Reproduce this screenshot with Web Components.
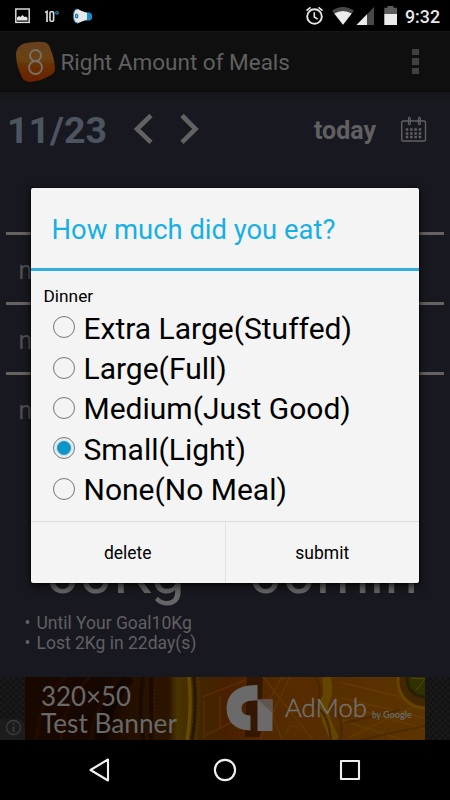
<!DOCTYPE html>
<html lang="en">
<head>
<meta charset="utf-8">
<title>Right Amount of Meals</title>
<style>
body {
  margin: 0;
  background: #000;
  font-family: Roboto, "Noto Sans", sans-serif;
}
</style>
</head>
<body>
<meal-app>
  <status-bar slot="status" time="9:32"></status-bar>
  <app-bar slot="bar">Right Amount of Meals</app-bar>
  <date-bar slot="date" date="11/23">today</date-bar>
  <meal-list slot="list">
    <meal-row></meal-row>
    <meal-row>none</meal-row>
    <meal-row>none</meal-row>
    <meal-row>none</meal-row>
  </meal-list>
  <meal-stats slot="stats">
    <span slot="weight">60Kg</span>
    <span slot="time">60min</span>
    <li>Until Your Goal10Kg</li>
    <li>Lost 2Kg in 22day(s)</li>
  </meal-stats>
  <ad-banner slot="ad"></ad-banner>
  <nav-bar slot="nav"></nav-bar>
  <meal-dialog slot="dialog" heading="How much did you eat?" label="Dinner">
    <radio-option>Extra Large(Stuffed)</radio-option>
    <radio-option>Large(Full)</radio-option>
    <radio-option>Medium(Just Good)</radio-option>
    <radio-option checked>Small(Light)</radio-option>
    <radio-option>None(No Meal)</radio-option>
    <dialog-button slot="actions">delete</dialog-button>
    <dialog-button slot="actions">submit</dialog-button>
  </meal-dialog>
</meal-app>

<script>
/**
 * Registers an element whose shadow root holds the given markup.
 */
function define (name, html, setUp) {
  const template = document.createElement('template')
  template.innerHTML = html
  window.customElements.define(name, class extends HTMLElement {
    constructor () {
      super()
      this.attachShadow({ mode: 'open' }).appendChild(document.importNode(template.content, true))
    }

    connectedCallback () {
      if (setUp) setUp(this, this.shadowRoot)
    }
  })
}

define('meal-app', `
<style>
:host {
  display: flex;
  flex-direction: column;
  position: relative;
  width: 450px;
  height: 800px;
  overflow: hidden;
  background: #181820;
}
.overlay {
  position: absolute;
  top: 188px;
  left: 31px;
}
.stats {
  flex: 1;
}
</style>
<slot name="status"></slot>
<slot name="bar"></slot>
<slot name="date"></slot>
<slot name="list"></slot>
<div class="stats"><slot name="stats"></slot></div>
<slot name="ad"></slot>
<slot name="nav"></slot>
<div class="overlay"><slot name="dialog"></slot></div>
`)

define('status-bar', `
<style>
:host {
  display: flex;
  height: 31px;
  background: #000;
}
svg {
  display: block;
}
.time {
  width: 45px;
  line-height: 33px;
  font-size: 17.8px;
  font-weight: 500;
  color: #e8e8e8;
}
</style>
<svg width="405" height="31" viewBox="0 0 405 31">
  <!-- screenshot -->
  <rect x="15.8" y="9" width="13.4" height="13.4" fill="none" stroke="#e6e6e6" stroke-width="1.4"/>
  <path d="M17 20.5v-3l2-1.5 1.5 1 2-2 2 2 1.5-.5 1.5 1.5v2.5z" fill="#e6e6e6"/>
  <!-- temperature -->
  <path d="M45.2 12.5l1.8-1v10.5" fill="none" stroke="#ddd" stroke-width="1.7"/>
  <rect x="50" y="11.7" width="3.6" height="9.6" rx="1" fill="none" stroke="#ddd" stroke-width="1.6"/>
  <circle cx="57" cy="12.8" r="1.3" fill="none" stroke="#1689b5" stroke-width="1.2"/>
  <!-- megaphone -->
  <path d="M84 12l6 .5 2 2v4l-2 2-6 .3z" fill="#1a8fc4"/>
  <path d="M77 9l10 4v6.500l-10 4z" fill="#e6e8ea"/>
  <ellipse cx="77.400" cy="16" rx="4" ry="7" fill="#e4e8ea"/>
  <path d="M78 9.300c-3-1-4.500 2-4.500 6.700s1.500 7.700 4.500 6.700" fill="none" stroke="#1a7fae" stroke-width=".8"/>
  <ellipse cx="76.600" cy="16" rx="1.800" ry="2.500" fill="#1a79a5"/>
  <circle cx="76.600" cy="16" r=".7" fill="#cde"/>
  <!-- alarm -->
  <circle cx="314.5" cy="16.5" r="7.3" fill="none" stroke="#e6e6e6" stroke-width="1.9"/>
  <path d="M314.3 12.3v4.700l3.300 2.200M306.500 10.700l4-3.400M322.500 10.700l-4-3.400" fill="none" stroke="#e6e6e6" stroke-width="1.6"/>
  <!-- wifi -->
  <path d="M332 10.700q11-7.500 22 0l-11 14z" fill="#484848"/>
  <path d="M334.300 13.600q8.700-5.400 17.400 0l-8.700 11.100z" fill="#ececec"/>
  <!-- signal -->
  <path d="M374 7v18h-17.500z" fill="#484848"/>
  <path d="M367 14.200v10.800h-10.500z" fill="#ececec"/>
  <!-- battery -->
  <path d="M387.500 6h6v1.800h3.500v6.200h-12.700v-6.200h3.200z" fill="#5c5c5c"/>
  <path d="M384.300 14h12.700v11h-12.700z" fill="#ececec"/>
</svg>
<div class="time"></div>
`, (el, root) => {
  root.querySelector('.time').textContent = el.getAttribute('time')
})

define('app-bar', `
<style>
:host {
  display: flex;
  align-items: center;
  box-sizing: border-box;
  height: 61px;
  padding: 0 0 0 15px;
  border-top: 1px solid #171717;
  border-bottom: 1px solid #0c0a0a;
  background: #0f0f0f;
}
.title {
  flex: 1;
  margin-left: 4.5px;
  font-size: 22.5px;
  color: #606060;
}
.menu {
  display: grid;
  gap: 3px;
  margin-right: 31.5px;
}
.menu i {
  width: 6.5px;
  height: 6.3px;
  background: #404040;
}
</style>
<svg width="41" height="42" viewBox="0 0 41 42">
  <defs><linearGradient id="g" x1="0" y1="0" x2="0" y2="1">
    <stop offset="0" stop-color="#66401f"/><stop offset=".5" stop-color="#6b4210"/>
    <stop offset=".55" stop-color="#653806"/><stop offset="1" stop-color="#661c00"/>
  </linearGradient></defs>
  <path d="M9 2.500Q20 0 29 1q5 1 6.500 7 3.500 8 4.500 19 0 6-6 8-8 5-19 6-7 0-9-7Q1 24 1 12q1-7 8-9.500z" fill="url(#g)"/>
  <path d="M2 18q8 6 19 3t17-3q2 5 2 9 0 6-6 8-8 5-19 6-7 0-9-7-3-8-4-16z" fill="#702a00" opacity=".3"/>
  <g fill="none" stroke="#77706a" stroke-width="1.9"><circle cx="20.5" cy="14.5" r="5.5"/><circle cx="20.5" cy="26.5" r="6.5"/></g>
</svg>
<div class="title"><slot></slot></div>
<div class="menu"><i></i><i></i><i></i></div>
`)

define('date-bar', `
<style>
:host {
  display: flex;
  align-items: center;
  height: 76px;
  color: #606060;
  background: linear-gradient(#15161a, #181820 14px);
}
.date {
  width: 126.5px;
  padding-left: 7px;
  font-size: 37.5px;
  font-weight: 700;
  color: #4c555f;
}
.today {
  flex: 1;
  padding-right: 24px;
  text-align: right;
  font-size: 25px;
  font-weight: 700;
}
.calendar {
  margin: 0 23px 1px 0;
}
</style>
<div class="date"></div>
<svg width="70" height="34" viewBox="0 0 70 34" fill="none" stroke="#626262" stroke-width="4.6">
  <path d="M17 2.500L3 16l14 13.300M48 2.500l13.500 13.500L48 29.300"/>
</svg>
<div class="today"><slot></slot></div>
<svg class="calendar" width="27" height="28" viewBox="0 0 27 28" fill="none" stroke="#606060" stroke-width="1.4">
  <rect x="1.7" y="5" width="23.8" height="20" rx="1.3"/>
  <path d="M8.500 8.500V3q0-1.800 1.500-1.800M18.500 8.500V3q0-1.800 1.500-1.800M10.300 1.500v6.500l-1.500 1M20.300 1.500v6.500l-1.500 1" stroke-width="1.2"/>
  <path d="M5.800 13.500h15.500M5.800 17.500h15.500M5.800 21h15.500" stroke-width="2.3" stroke-dasharray="2.5 1.8"/>
</svg>
`, (el, root) => {
  root.querySelector('.date').textContent = el.getAttribute('date')
})

define('meal-list', `
<style>
:host {
  display: flex;
  flex-direction: column;
  height: 370px;
  padding: 0 6px;
  margin-top: -3px;
}
</style>
<slot></slot>
`)

define('meal-row', `
<style>
:host {
  display: flex;
  align-items: center;
  box-sizing: border-box;
  height: 70px;
  padding: 3px 0 0 12.5px;
  border-bottom: 3px solid #65625f;
  font-size: 25px;
  color: #505050;
}
:host(:last-of-type) {
  border-bottom-color: transparent;
}
</style>
<slot></slot>
`)

define('meal-stats', `
<style>
:host {
  display: flex;
  flex-direction: column;
  padding-top: 2.5px;
  color: #606060;
}
.values {
  display: flex;
  height: 68px;
  padding-left: 44.5px;
  line-height: 69px;
  font-size: 61px;
  color: #656565;
}
.weight {
  width: 203px;
}
ul {
  margin: 7.5px 0 0;
  padding-left: 36.5px;
  list-style: none;
  font-size: 17.5px;
  line-height: 20.4px;
}
::slotted(li)::before {
  content: "•";
  display: inline-block;
  width: 12px;
  margin-left: -12px;
}
</style>
<div class="values">
  <div class="weight"><slot name="weight"></slot></div>
  <slot name="time"></slot>
</div>
<ul><slot></slot></ul>
`)

define('ad-banner', `
<style>
:host {
  display: block;
  height: 63px;
  background: #131313;
}
svg {
  display: block;
}
text {
  fill: #696969;
  font-family: Lato, sans-serif;
}
</style>
<svg width="450" height="63" viewBox="0 0 450 63">
  <defs>
    <pattern id="hex" width="6" height="6" patternUnits="userSpaceOnUse">
      <circle cx="1.5" cy="1.5" r="1.3" fill="#1b1b1b"/><circle cx="4.5" cy="4.5" r="1.3" fill="#1b1b1b"/>
    </pattern>
    <linearGradient id="art">
      <stop offset="0" stop-color="#190800"/><stop offset=".2" stop-color="#160700"/>
      <stop offset=".27" stop-color="#251000"/><stop offset=".36" stop-color="#2c1500"/>
      <stop offset=".38" stop-color="#4a3400"/><stop offset=".44" stop-color="#402600"/>
      <stop offset=".5" stop-color="#482000"/><stop offset=".65" stop-color="#552b00"/>
      <stop offset="1" stop-color="#5c3400"/>
    </linearGradient>
    <clipPath id="clip"><rect x="25" width="400" height="63"/></clipPath>
  </defs>
  <rect width="450" height="63" fill="url(#hex)"/>
  <g clip-path="url(#clip)">
    <rect x="25" width="400" height="63" fill="url(#art)"/>
    <g fill="none" opacity=".55">
      <path d="M130 0q-24 26-29 63" stroke="#080300" stroke-width="11"/>
      <path d="M67 0q-28 18-30 63M90 0q-27 25-29 63M115 6q-23 28-24 57" stroke="#2b1000" stroke-width="3"/>
      <path d="M143 0q-5 30 0 63M151 0v63" stroke="#120500" stroke-width="4"/>
      <path d="M156 0q-3 30 1 63" stroke="#3b1d00" stroke-width="3" stroke-dasharray="2 2"/>
      <path d="M189 0q3 35-2 63" stroke="#806400" stroke-width="3.5"/>
      <path d="M194 0q3 35-2 63" stroke="#110800" stroke-width="3"/>
      <path d="M198 0q3 35-2 63" stroke="#573300" stroke-width="3" stroke-dasharray="2 1.5"/>
      <path d="M202 20l44-17M202 60l45-22M204 24v33M220 19v32" stroke="#6a3500" stroke-width="1.5"/>
      <path d="M247 0h16l-3 60h-15z" fill="#200c00"/>
      <path d="M282 0l-14 25 14 38M263 0l50 63M290 0l-30 63M286 57q4-13 14-5" stroke="#683c00" stroke-width="1.6"/>
      <path d="M326 0q4 16-1 24t10 39" stroke="#6f5a00" stroke-width="9"/>
      <path d="M316 0q8 18-1 30 13 4 16 33M340 63q5-20-6-34" stroke="#3e2500" stroke-width="2.500"/>
      <path d="M342 21l83 20M342 28l83 24M342 43l60 20M350 60l75-36M342 6l60 14" stroke="#6e4200" stroke-width="1.500"/>
      <path d="M345 46l55-13M360 63l65-14" stroke="#432400" stroke-width="2"/>
    </g>
    <circle cx="425" cy="4" r="27" fill="#432700" stroke="#664300" stroke-width="3"/>
    <circle cx="425" cy="2" r="18" fill="#313000" stroke="#252000" stroke-width="3"/>
    <path d="M425 2l-14-1M425 2l-9 11" stroke="#534c00"/>
  </g>
  <text x="41" y="29" font-size="26.2" textLength="90" lengthAdjust="spacingAndGlyphs">320×50</text>
  <text x="41" y="55.5" font-size="26.2" textLength="136" lengthAdjust="spacingAndGlyphs">Test Banner</text>
  <!-- AdMob mark -->
  <path d="M257.500 8v15.500q-16-1-16 8 0 7 9 7v15q-24-1-24-23Q228 8 257.500 8z" fill="#6a6a6a"/>
  <path d="M257.500 22.500h15V54h-15z" fill="#6a6a6a"/>
  <path d="M257.500 22.500h15V36z" fill="#5f554e"/>
  <text x="285" y="40" font-size="25.5" font-weight="300" textLength="82" lengthAdjust="spacingAndGlyphs" style="fill: #747474; stroke: #747474; stroke-width: .4">AdMob</text>
  <text x="372" y="40.5" font-size="9" font-weight="700" textLength="9" lengthAdjust="spacingAndGlyphs">by</text>
  <text x="383" y="40.5" font-size="10" font-weight="700" textLength="29" lengthAdjust="spacingAndGlyphs">Google</text>
  <!-- ad info -->
  <path d="M0 42h18q7 0 7 8v13H0z" fill="#1c1c1c"/>
  <circle cx="13.5" cy="50.5" r="7" fill="none" stroke="#3d3d3d" stroke-width="1.3"/>
  <path d="M13.500 46v1.800M13.500 49.500v5.500" stroke="#3d3d3d" stroke-width="1.8"/>
</svg>
`)

define('nav-bar', `
<style>
:host {
  display: flex;
  justify-content: center;
  align-items: center;
  gap: 99px;
  height: 60px;
  background: #000;
}
svg {
  width: 26px;
  height: 26px;
  fill: none;
  stroke: #f0f0f0;
  stroke-width: 2.1;
  stroke-linejoin: round;
}
</style>
<svg viewBox="0 0 26 26"><path d="M3.500 13L21 2.500v21z"/></svg>
<svg viewBox="0 0 26 26"><circle cx="13" cy="13" r="10.1"/></svg>
<svg viewBox="0 0 26 26"><rect x="4" y="4" width="18" height="18"/></svg>
`)

define('meal-dialog', `
<style>
:host {
  display: flex;
  flex-direction: column;
  width: 388px;
  height: 394.5px;
  border-radius: 2px;
  background: #f4f4f4;
  box-shadow: 0 0 2px #000, 0 3px 9px rgba(0, 0, 0, .8);
  overflow: hidden;
  color: #000;
}
.heading {
  height: 80px;
  padding-left: 20.5px;
  line-height: 85px;
  font-size: 27.4px;
  color: #16b0e4;
  border-bottom: 3px solid #30aee0;
}
.body {
  flex: 1;
  padding: 15px 0 0 12.5px;
}
.label {
  height: 22.5px;
  line-height: 21px;
  font-size: 17.3px;
}
.actions {
  display: flex;
  height: 61px;
  border-top: 1px solid #dcdcdc;
}
</style>
<div class="heading"></div>
<div class="body">
  <div class="label"></div>
  <slot></slot>
</div>
<div class="actions"><slot name="actions"></slot></div>
`, (el, root) => {
  root.querySelector('.heading').textContent = el.getAttribute('heading')
  root.querySelector('.label').textContent = el.getAttribute('label')
})

define('radio-option', `
<style>
:host {
  display: flex;
  align-items: center;
  gap: 8px;
  height: 40.4px;
  padding-left: 8px;
  font-size: 30px;
}
svg {
  width: 24px;
  height: 24px;
  margin-bottom: 3px;
}
span {
  padding-bottom: 1px;
}
.dot {
  display: none;
}
:host([checked]) .dot {
  display: block;
}
</style>
<svg viewBox="0 0 24 24">
  <circle cx="12" cy="12" r="10.5" fill="none" stroke="#555" stroke-width=".8"/>
  <g class="dot">
    <circle cx="12" cy="12" r="8.2" fill="#a5dcf0" stroke="#cfeaf4" stroke-width="1.5"/>
    <circle cx="12" cy="12" r="6.5" fill="#0a97cc" stroke="#38606f" stroke-width=".5"/>
  </g>
</svg>
<span><slot></slot></span>
`)

define('dialog-button', `
<style>
:host {
  flex: 1;
  line-height: 62px;
  text-align: center;
  font-size: 17.5px;
}
:host(:last-of-type) {
  border-left: 1px solid #e2e2e2;
}
</style>
<slot></slot>
`)
</script>
</body>
</html>
